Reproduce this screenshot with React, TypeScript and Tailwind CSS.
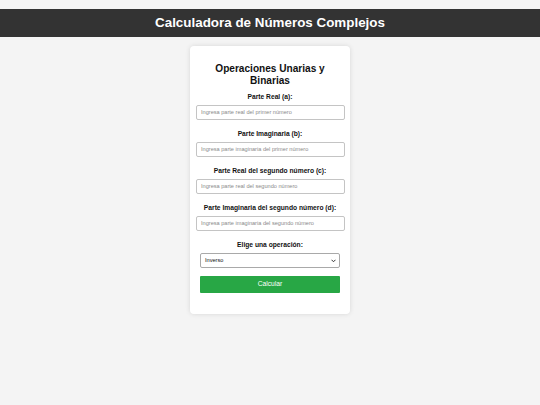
import React from "react";

const fields = [
  { label: "Parte Real (a):", ph: "Ingresa parte real del primer número" },
  { label: "Parte Imaginaria (b):", ph: "Ingresa parte imaginaria del primer número" },
  { label: "Parte Real del segundo número (c):", ph: "Ingresa parte real del segundo número" },
  { label: "Parte Imaginaria del segundo número (d):", ph: "Ingresa parte imaginaria del segundo número" },
];

export default function App() {
  return (
    <div className="min-h-[405px] w-full bg-[#f4f4f4] pt-[9px] font-['Liberation_Sans',Arial,sans-serif] text-[#222] antialiased">
      <header className="flex h-[28px] items-center justify-center bg-[#333333]">
        <h1 className="text-[13.4px] font-bold leading-none text-white">Calculadora de Números Complejos</h1>
      </header>
      <div className="flex justify-center pt-[9px]">
        <div className="w-[160px] rounded-[4px] bg-white px-[10px] pt-[17px] pb-[21px] shadow-[0_0_5px_rgba(0,0,0,0.12)]">
          <h2 className="mb-[4px] text-center text-[10.1px] font-bold leading-[12.4px] text-[#111]">
            Operaciones Unarias y Binarias
          </h2>
          {fields.map((f) => (
            <div key={f.label}>
              <label className="mb-[4px] block whitespace-nowrap text-center text-[6.7px] font-bold leading-[9px] text-[#111]">
                {f.label}
              </label>
              <input
                type="text"
                placeholder={f.ph}
                className="mb-[9px] ml-[-4px] block h-[15px] w-[149px] rounded-[2px] border border-[#c4c4c4] bg-white px-[4px] text-[5.6px] leading-none outline-none placeholder:text-[#8a8a8a]"
              />
            </div>
          ))}
          <label className="mb-[4.5px] block text-center text-[6.7px] font-bold leading-[9px] text-[#111]">
            Elige una operación:
          </label>
          <div className="relative mb-[8px] flex h-[15px] w-[140px] items-center rounded-[2px] border border-[#a9a9a9] bg-white px-[4px]">
            <span className="text-[5.6px] leading-none text-[#111]">Inverso</span>
            <svg className="absolute right-[3px] top-[5px]" width="5" height="4" viewBox="0 0 10 8">
              <path d="M1 1.5 L5 5.5 L9 1.5" stroke="#333" strokeWidth="2" fill="none" />
            </svg>
          </div>
          <button className="flex h-[17px] w-[140px] items-center justify-center rounded-[1px] bg-[#28a745] text-[6.7px] leading-none text-white">
            Calcular
          </button>
        </div>
      </div>
    </div>
  );
}
